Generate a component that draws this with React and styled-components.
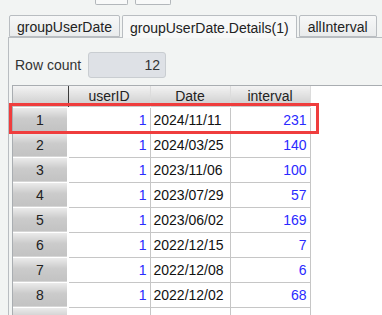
import React from 'react';
import styled, { createGlobalStyle } from 'styled-components';

const GlobalStyle = createGlobalStyle`
  html, body { margin: 0; padding: 0; }
  body {
    background: #f2f4f3;
    font-family: "Liberation Sans", Arial, sans-serif;
    width: 382px;
    height: 315px;
    overflow: hidden;
  }
`;

const Page = styled.div`
  position: relative;
  width: 382px;
  height: 315px;
  overflow: hidden;
`;

const TopBar = styled.div`
  height: 15px;
  display: flex;
  align-items: flex-start;
  gap: 7px;
  padding-left: 95px;
`;

const TopButton = styled.div`
  width: ${p => p.w}px;
  height: 5px;
  box-sizing: border-box;
  border: 1px solid #b3b7bb;
  border-top: none;
  border-radius: 0 0 2px 2px;
  background: #f8f9f9;
`;

const Tabs = styled.div`
  display: flex;
  gap: 2px;
  padding-left: 9px;
  height: 22px;
  position: relative;
  z-index: 1;
`;

const Tab = styled.div`
  box-sizing: border-box;
  height: ${p => (p.active ? 23 : 22)}px;
  padding: 0 ${p => p.pad}px;
  display: flex;
  align-items: center;
  border: 1px solid #b9bdc1;
  border-bottom: ${p => (p.active ? 'none' : '1px solid #b9bdc1')};
  border-radius: 2px 2px 0 0;
  background: ${p => (p.active ? '#f7f8f8' : 'linear-gradient(#f7f8f8, #e9ebec)')};
  font-size: 14px;
  color: #222;
  padding-top: 2px;
`;

const Panel = styled.div`
  margin-left: 8px;
  border-top: 1px solid #b9bdc1;
  border-left: 1px solid #b9bdc1;
  padding-top: 14px;
  height: 300px;
`;

const CountRow = styled.div`
  display: flex;
  align-items: center;
  padding-left: 6px;
  height: 26px;
`;

const CountLabel = styled.span`
  font-size: 14px;
  color: #333;
  width: 73px;
`;

const CountBox = styled.div`
  box-sizing: border-box;
  width: 78px;
  height: 26px;
  border: 1px solid #c9cdd1;
  border-radius: 3px;
  background: #dee1e6;
  font-size: 14px;
  color: #333;
  display: flex;
  align-items: center;
  justify-content: flex-end;
  padding-right: 5px;
`;

const Viewport = styled.div`
  margin-top: 7px;
  margin-left: 3px;
  border-top: 1px solid #a9adb1;
  border-left: 1px solid #a9adb1;
  background: #ffffff;
  height: 240px;
`;

const Grid = styled.table`
  border-collapse: collapse;
  table-layout: fixed;
  font-size: 14px;
`;

const HeadCell = styled.th`
  box-sizing: border-box;
  width: ${p => p.w}px;
  height: 21px;
  padding: 0;
  font-weight: normal;
  color: #222;
  text-align: center;
  background: linear-gradient(#f3f3f3, #cacaca);
  border-right: 1px solid ${p => (p.dark ? '#3c3c3c' : '#dcdcdc')};
  border-bottom: 1px solid #ffffff;
`;

const RowHead = styled.td`
  box-sizing: border-box;
  height: 25px;
  padding: 0;
  text-align: center;
  color: #222;
  background: linear-gradient(#ececec 0%, #cbcbcb 45%, #c2c2c2 100%);
  border-top: 1px solid #fafafa;
  border-bottom: 1px solid #ffffff;
  border-right: 2px solid #ffffff;
`;

const Cell = styled.td`
  box-sizing: border-box;
  height: 25px;
  text-align: ${p => (p.num ? 'right' : 'left')};
  color: ${p => (p.num ? '#2a2aff' : '#111')};
  border: 1px solid #c6c6c6;
  padding: 0 ${p => (p.num ? 3 : 4)}px 0 ${p => (p.num ? 4 : 3)}px;
`;

const Highlight = styled.div`
  position: absolute;
  left: 9px;
  top: 103px;
  width: 310px;
  height: 31px;
  box-sizing: border-box;
  border: 3px solid #ef3d3d;
  pointer-events: none;
`;

const rows = [
  ['2024/11/11', 231],
  ['2024/03/25', 140],
  ['2023/11/06', 100],
  ['2023/07/29', 57],
  ['2023/06/02', 169],
  ['2022/12/15', 7],
  ['2022/12/08', 6],
  ['2022/12/02', 68],
];

export default function App() {
  return (
    <Page>
      <GlobalStyle />
      <TopBar>
        <TopButton w={33} />
        <TopButton w={36} />
      </TopBar>
      <Tabs>
        <Tab pad={7}>groupUserDate</Tab>
        <Tab pad={7} active>groupUserDate.Details(1)</Tab>
        <Tab pad={8}>allInterval</Tab>
      </Tabs>
      <Panel>
        <CountRow>
          <CountLabel>Row count</CountLabel>
          <CountBox>12</CountBox>
        </CountRow>
        <Viewport>
          <Grid>
            <thead>
              <tr>
                <HeadCell w={55} dark />
                <HeadCell w={82}>userID</HeadCell>
                <HeadCell w={80}>Date</HeadCell>
                <HeadCell w={80}>interval</HeadCell>
              </tr>
            </thead>
            <tbody>
              {rows.map(([date, interval], i) => (
                <tr key={i}>
                  <RowHead>{i + 1}</RowHead>
                  <Cell num>1</Cell>
                  <Cell>{date}</Cell>
                  <Cell num>{interval}</Cell>
                </tr>
              ))}
              <tr>
                <RowHead />
                <Cell num />
                <Cell />
                <Cell num />
              </tr>
            </tbody>
          </Grid>
        </Viewport>
      </Panel>
      <Highlight />
    </Page>
  );
}
